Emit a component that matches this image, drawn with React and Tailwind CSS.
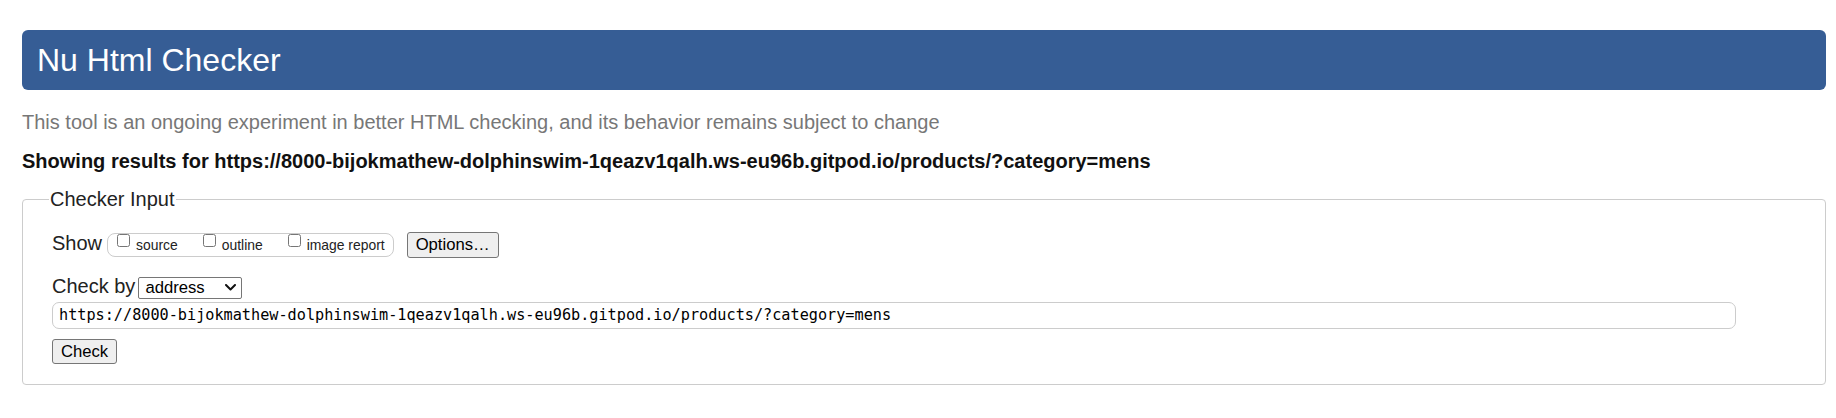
import { useState } from 'react';

const TARGET_URL = 'https://8000-bijokmathew-dolphinswim-1qeazv1qalh.ws-eu96b.gitpod.io/products/?category=mens';

const SHOW_OPTIONS = [
  { id: 'source', label: 'source' },
  { id: 'outline', label: 'outline' },
  { id: 'image', label: 'image report' },
];

function ShowBox({ checked, onToggle }) {
  return (
    <div className="flex h-[24px] items-center rounded-[8px] border border-[#cccccc] pl-[9px] pr-[8px]">
      {SHOW_OPTIONS.map((opt, i) => (
        <label
          key={opt.id}
          className={`flex items-center ${i < SHOW_OPTIONS.length - 1 ? 'mr-[25px]' : ''}`}
        >
          <input
            type="checkbox"
            checked={checked[opt.id]}
            onChange={() => onToggle(opt.id)}
            className="m-0 mb-[8px] h-[13px] w-[13px]"
          />
          <span className="ml-[6px] text-[13.9px] leading-[16px]">{opt.label}</span>
        </label>
      ))}
    </div>
  );
}

export default function App() {
  const [checked, setChecked] = useState({ source: false, outline: false, image: false });
  const [url, setUrl] = useState(TARGET_URL);

  const toggle = (id) => setChecked((c) => ({ ...c, [id]: !c[id] }));

  return (
    <div className="min-h-screen bg-white pl-[22px] pr-[10px] pt-[30px] font-['Liberation_Sans',Arial,sans-serif] text-[#222]">
      {/* ---------------------- HEADER ---------------------- */}
      <h1 className="flex h-[60px] items-center rounded-[6px] bg-[#365d95] pl-[15px] text-[32px] font-normal text-white">
        Nu Html Checker
      </h1>

      <p className="mt-[20px] h-[25px] text-[20px] leading-[25px] text-[#777]">
        This tool is an ongoing experiment in better HTML checking, and its behavior remains subject to change
      </p>

      <p className="mt-[14px] h-[25px] text-[20px] font-bold leading-[25px] text-[#111]">
        Showing results for {TARGET_URL}
      </p>

      {/* ---------------------- CHECKER INPUT ---------------------- */}
      <fieldset className="mt-[12.5px] rounded-[4px] border border-[#cccccc] pb-[20px] pl-[29px] pr-[20px] pt-[20px]">
        <legend className="-ml-[3px] px-[1px] text-[20px] leading-[25px]">Checker Input</legend>

        <div className="flex h-[26px] items-center">
          <span className="mr-[5px] pb-[3px] text-[20px] leading-[25px]">Show</span>
          <ShowBox checked={checked} onToggle={toggle} />
          <button
            type="button"
            className="ml-[13px] flex h-[26px] w-[92px] items-center justify-center rounded-[3px] border border-[#767676] bg-[#efefef] text-[16.67px] leading-[20px] text-black"
          >
            Options…
          </button>
        </div>

        <div className="mt-[19px] flex h-[22px] items-center">
          <span className="pb-[3px] text-[20px] leading-[25px]">Check by</span>
          <div className="ml-[3px] flex h-[22px] w-[104px] items-center justify-between rounded-[2px] border border-[#767676] bg-white pl-[6px] pr-[5px] text-[16.67px] leading-[20px] text-black">
            <span>address</span>
            <svg width="11" height="7" viewBox="0 0 11 7" fill="none">
              <polyline points="1,1 5.5,5.5 10,1" stroke="#111" strokeWidth="2" strokeLinecap="round" strokeLinejoin="round" />
            </svg>
          </div>
        </div>

        <div className="mt-[3px] flex h-[27px] w-[1684px] items-center rounded-[7px] border border-[#cccccc] pl-[6px]">
          <input
            value={url}
            onChange={(e) => setUrl(e.target.value)}
            className="w-full bg-transparent font-['DejaVu_Sans_Mono',monospace] text-[15.2px] leading-[20px] text-black outline-none"
          />
        </div>

        <button
          type="button"
          className="mt-[10.5px] flex h-[25px] w-[65px] items-center justify-center rounded-[3px] border border-[#767676] bg-[#efefef] text-[16.67px] leading-[20px] text-black"
        >
          Check
        </button>
      </fieldset>
    </div>
  );
}
